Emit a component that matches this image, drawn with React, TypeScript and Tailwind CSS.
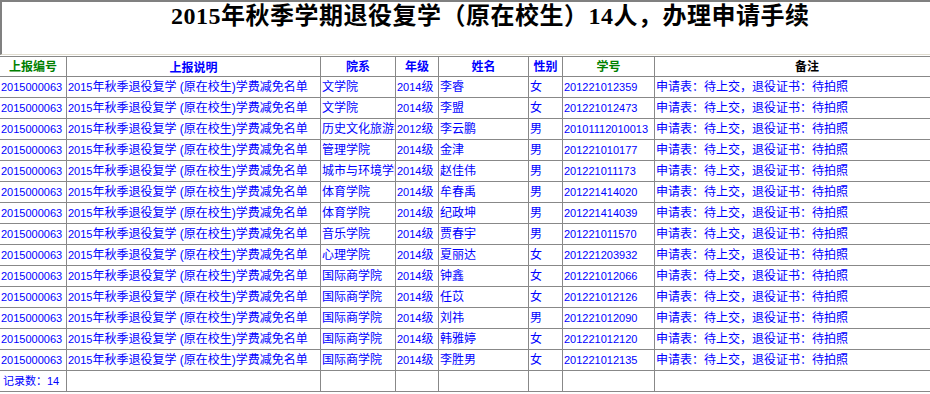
const rows = [
  ["文学院", "2014", "李睿", "女", "201221012359"],
  ["文学院", "2014", "李盟", "女", "201221012473"],
  ["历史文化旅游学院", "2012", "李云鹏", "男", "20101112010013"],
  ["管理学院", "2014", "金津", "男", "201221010177"],
  ["城市与环境学院", "2014", "赵佳伟", "男", "201221011173"],
  ["体育学院", "2014", "牟春禹", "男", "201221414020"],
  ["体育学院", "2014", "纪政坤", "男", "201221414039"],
  ["音乐学院", "2014", "贾春宇", "男", "201221011570"],
  ["心理学院", "2014", "夏丽达", "女", "201221203932"],
  ["国际商学院", "2014", "钟鑫", "女", "201221012066"],
  ["国际商学院", "2014", "任苡", "女", "201221012126"],
  ["国际商学院", "2014", "刘祎", "男", "201221012090"],
  ["国际商学院", "2014", "韩雅婷", "女", "201221012120"],
  ["国际商学院", "2014", "李胜男", "女", "201221012135"],
];

const cols = "grid grid-cols-[67px_254px_75px_43px_90px_34px_92px_1fr]";
const cell = "border-r border-b border-[#888] overflow-hidden whitespace-nowrap flex items-center px-[1px]";

function Num({ children }: { children: React.ReactNode }) {
  return <span className="text-[11px]">{children}</span>;
}

export default function App() {
  return (
    <div className="w-[930px] h-[394px] overflow-hidden bg-white font-['Liberation_Sans','Noto_Sans_CJK_SC',sans-serif] text-[12px] leading-none">
      <div className="h-[55px] w-[960px] border-t-2 border-l-2 border-t-[#808080] border-l-[#808080] border-b border-b-[#e0dccf] pl-[169px] pt-[1px]">
        <h1 className="text-[24px] leading-[26px] tracking-[0.5px] font-bold text-black font-['Liberation_Serif','Noto_Sans_CJK_SC',serif]">
          2015年秋季学期退役复学（原在校生）14人，办理申请手续
        </h1>
      </div>

      <div className="mt-px w-[960px] border-t border-[#888]">
        <div className={`${cols} h-[20px] font-bold`}>
          <div className={`${cell} justify-center text-[#008000]`}>上报编号</div>
          <div className={`${cell} justify-center text-[#0000ff] pt-[3px]`}>上报说明</div>
          <div className={`${cell} justify-center text-[#0000ff]`}>院系</div>
          <div className={`${cell} justify-center text-[#0000ff]`}>年级</div>
          <div className={`${cell} justify-center text-[#0000ff]`}>姓名</div>
          <div className={`${cell} justify-center text-[#0000ff]`}>性别</div>
          <div className={`${cell} justify-center text-[#008000]`}>学号</div>
          <div className={`${cell} justify-center text-black`}>备注</div>
        </div>

        {rows.map((r, i) => (
          <div key={i} className={`${cols} h-[21px] text-[#0000ff]`}>
            <div className={cell}><Num>2015000063</Num></div>
            <div className={cell}>
              <Num>2015</Num>年秋季退役复学 (原在校生)学费减免名单
            </div>
            <div className={cell}>{r[0]}</div>
            <div className={cell}><Num>{r[1]}</Num>级</div>
            <div className={cell}>{r[2]}</div>
            <div className={cell}>{r[3]}</div>
            <div className={cell}><Num>{r[4]}</Num></div>
            <div className={cell}>申请表：待上交，退役证书：待拍照</div>
          </div>
        ))}

        <div className={`${cols} h-[21px] text-[#0000ff]`}>
          <div className={`${cell} text-[11px] pl-[3px]`}>记录数：14</div>
          <div className={cell} />
          <div className={cell} />
          <div className={cell} />
          <div className={cell} />
          <div className={cell} />
          <div className={cell} />
          <div className={cell} />
        </div>
      </div>
    </div>
  );
}
